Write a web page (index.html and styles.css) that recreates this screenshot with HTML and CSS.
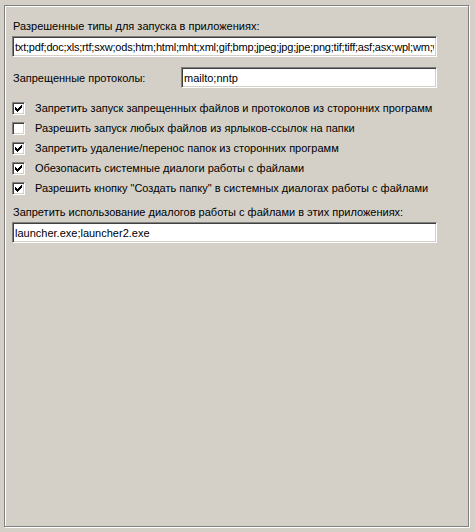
FILE: index.html
```html
<!DOCTYPE html>
<html>
<head>
<meta charset="utf-8">
<link rel="stylesheet" href="styles.css">
</head>
<body>
<div class="frame">
  <div class="label">Разрешенные типы для запуска в приложениях:</div>
  <input class="field wide tight" type="text" value="txt;pdf;doc;xls;rtf;sxw;ods;htm;html;mht;xml;gif;bmp;jpeg;jpg;jpe;png;tif;tiff;asf;asx;wpl;wm;wmv">
  <div class="row">
    <span class="rowlabel">Запрещенные протоколы:</span>
    <input class="field narrow" type="text" value="mailto;nntp">
  </div>
  <div class="checks">
    <div class="check"><span class="box"><svg width="13" height="13" viewBox="0 0 13 13" shape-rendering="crispEdges"><path d="M3 5h1v3h-1zM4 6h1v3h-1zM5 7h1v3h-1zM6 6h1v3h-1zM7 5h1v3h-1zM8 4h1v3h-1zM9 3h1v3h-1z" fill="#000"/></svg></span><span>Запретить запуск запрещенных файлов и протоколов из сторонних программ</span></div>
    <div class="check"><span class="box"></span><span>Разрешить запуск любых файлов из ярлыков-ссылок на папки</span></div>
    <div class="check"><span class="box"><svg width="13" height="13" viewBox="0 0 13 13" shape-rendering="crispEdges"><path d="M3 5h1v3h-1zM4 6h1v3h-1zM5 7h1v3h-1zM6 6h1v3h-1zM7 5h1v3h-1zM8 4h1v3h-1zM9 3h1v3h-1z" fill="#000"/></svg></span><span>Запретить удаление/перенос папок из сторонних программ</span></div>
    <div class="check"><span class="box"><svg width="13" height="13" viewBox="0 0 13 13" shape-rendering="crispEdges"><path d="M3 5h1v3h-1zM4 6h1v3h-1zM5 7h1v3h-1zM6 6h1v3h-1zM7 5h1v3h-1zM8 4h1v3h-1zM9 3h1v3h-1z" fill="#000"/></svg></span><span>Обезопасить системные диалоги работы с файлами</span></div>
    <div class="check"><span class="box"><svg width="13" height="13" viewBox="0 0 13 13" shape-rendering="crispEdges"><path d="M3 5h1v3h-1zM4 6h1v3h-1zM5 7h1v3h-1zM6 6h1v3h-1zM7 5h1v3h-1zM8 4h1v3h-1zM9 3h1v3h-1z" fill="#000"/></svg></span><span>Разрешить кнопку "Создать папку" в системных диалогах работы с файлами</span></div>
  </div>
  <div class="label label3">Запретить использование диалогов работы с файлами в этих приложениях:</div>
  <input class="field wide" type="text" value="launcher.exe;launcher2.exe">
</div>
</body>
</html>
```

FILE: styles.css
```css
html, body {
  margin: 0;
  padding: 0;
  background: #d4d0c8;
  width: 475px;
  height: 532px;
  overflow: hidden;
}
body {
  font-family: "Liberation Sans", Arial, sans-serif;
  font-size: 11px;
  color: #000;
}
.frame {
  box-sizing: border-box;
  margin: 5px 0 0 4px;
  width: 465px;
  height: 522px;
  border: 1px solid #808080;
  box-shadow: inset 1px 1px 0 #fff, 1px 1px 0 #fff;
  padding: 13px 0 0 7px;
}
.label {
  height: 14px;
  line-height: 14px;
  padding-left: 1px;
  margin-bottom: 3px;
}
.label3 {
  margin-top: 7px;
}
.field {
  display: block;
  box-sizing: border-box;
  height: 21px;
  margin: 0;
  padding: 0 2px;
  border: 1px solid;
  border-color: #808080 #fff #fff #808080;
  box-shadow: inset 1px 1px 0 #404040, inset -1px -1px 0 #d4d0c8;
  background: #fff;
  font-family: "Liberation Sans", Arial, sans-serif;
  font-size: 11px;
  color: #000;
  outline: none;
}
.tight {
  letter-spacing: -0.2px;
}
.wide {
  width: 425px;
}
.narrow {
  width: 256px;
}
.row {
  display: flex;
  align-items: center;
  margin-top: 10px;
  height: 21px;
}
.rowlabel {
  width: 168px;
  padding-left: 1px;
}
.checks {
  margin-top: 10px;
}
.check {
  display: flex;
  align-items: center;
  height: 20px;
  white-space: nowrap;
}
.box {
  box-sizing: border-box;
  width: 13px;
  height: 13px;
  flex: none;
  position: relative;
  background: #fff;
  border: 1px solid;
  border-color: #808080 #fff #fff #808080;
  box-shadow: inset 1px 1px 0 #404040, inset -1px -1px 0 #d4d0c8;
  margin-right: 10px;
}
.box svg {
  position: absolute;
  left: -1px;
  top: -1px;
  display: block;
}
```
